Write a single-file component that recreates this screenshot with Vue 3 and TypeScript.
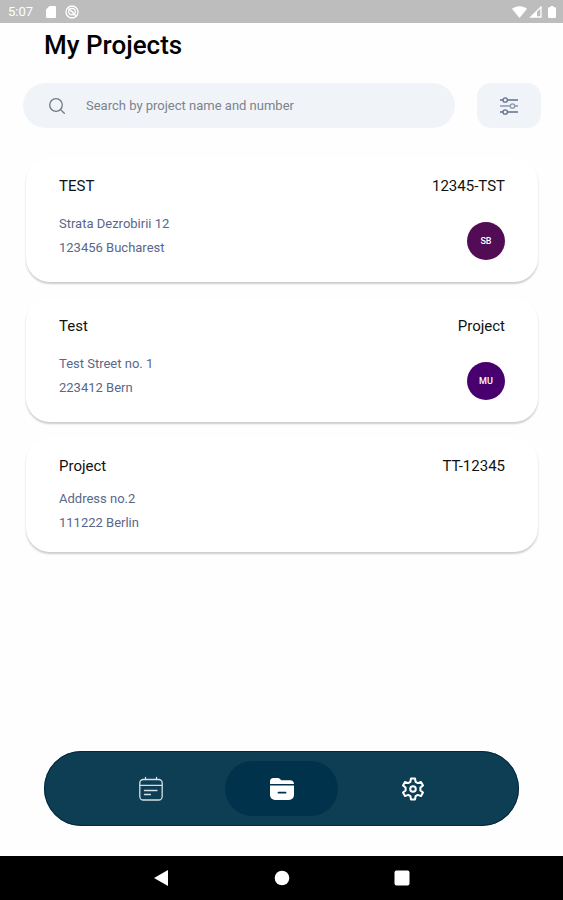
<script setup lang="ts">
import { ref } from 'vue'

interface Project {
  name: string
  code: string
  street: string
  city: string
  initials?: string
  tone?: string
}

const query = ref('')

const projects: Project[] = [
  { name: 'TEST', code: '12345-TST', street: 'Strata Dezrobirii 12', city: '123456 Bucharest', initials: 'SB', tone: 'plum' },
  { name: 'Test', code: 'Project', street: 'Test Street no. 1', city: '223412 Bern', initials: 'MU', tone: 'indigo' },
  { name: 'Project', code: 'TT-12345', street: 'Address no.2', city: '111222 Berlin' },
]
</script>

<template>
  <div class="screen">
    <div class="status">
      <span class="clock">5:07</span>
      <svg class="sd" width="10" height="12" viewBox="0 0 10 12"><path d="M3.6 0H9a1 1 0 0 1 1 1v10a1 1 0 0 1-1 1H1a1 1 0 0 1-1-1V3.600z" fill="#fff" /></svg>
      <svg width="14" height="14" viewBox="0 0 14 14" fill="none" stroke="#fff">
        <circle cx="7" cy="7" r="6" stroke-width="1.300" />
        <circle cx="7" cy="6.600" r="3.300" stroke-width="1.200" />
        <path d="M3.500 3.500l7.500 7.500M6 5.500l3 3M9.500 9.500l2 2.500" stroke-width="1.200" />
      </svg>
      <div class="signals">
        <svg width="15" height="12" viewBox="0 0 15 12"><path d="M7.500 12L0 2.800C4-.7 11-.7 15 2.800z" fill="#fff" /></svg>
        <svg width="13" height="12" viewBox="0 0 13 12"><path d="M12 1v10H1.800z" fill="none" stroke="#fff" stroke-width="1.300" /><path d="M8 5v6H1.800z" fill="#fff" /></svg>
        <svg class="battery" width="8" height="12" viewBox="0 0 8 12"><path d="M2.500 0h3v1.200H7a1 1 0 0 1 1 1V11a1 1 0 0 1-1 1H1a1 1 0 0 1-1-1V2.200a1 1 0 0 1 1-1h1.500z" fill="#fff" /></svg>
      </div>
    </div>

    <main class="content">
      <h1>My Projects</h1>

      <div class="tools">
        <label class="search">
          <svg width="18" height="18" viewBox="0 0 18 18" fill="none" stroke="#6b7886" stroke-width="1.300" stroke-linecap="round">
            <circle cx="8" cy="8" r="6.300" /><path d="M12.600 12.600L16.300 16.300" />
          </svg>
          <input v-model="query" type="text" placeholder="Search by project name and number" aria-label="Search projects" />
        </label>
        <button class="filter" type="button" aria-label="Filter">
          <svg width="18" height="18" viewBox="0 0 18 18" fill="none" stroke-width="1.300">
            <g stroke="#62718a"><path d="M0 3h3M7.500 3H18" /><circle cx="5.200" cy="3" r="2.200" /></g>
            <g stroke="#8998ad"><path d="M0 9h10M15 9h3" /><circle cx="12.500" cy="9" r="2.200" /></g>
            <g stroke="#62718a"><path d="M0 15h3M7.500 15H18" /><circle cx="5.200" cy="15" r="2.200" /></g>
          </svg>
        </button>
      </div>

      <ul class="list">
        <li v-for="p in projects" :key="p.code" class="card">
          <div class="head">
            <h2>{{ p.name }}</h2>
            <span class="code">{{ p.code }}</span>
          </div>
          <div class="body" :class="{ staffed: p.initials }">
            <address>{{ p.street }}<br />{{ p.city }}</address>
            <span v-if="p.initials" class="avatar" :class="p.tone">{{ p.initials }}</span>
          </div>
        </li>
      </ul>
    </main>

    <nav class="tabs" aria-label="Main">
      <button class="tab" type="button" aria-label="Calendar">
        <svg width="26" height="26" viewBox="0 0 26 26" fill="none" stroke="#d3dfe6" stroke-width="1.300" stroke-linecap="round">
          <rect x="1.800" y="3.500" width="22.400" height="20.500" rx="3.500" />
          <path d="M2 9.300h22M7.500 1.500v2M18.500 1.500v2M6.500 14.500h12.500M6.500 18.500h6" />
        </svg>
      </button>
      <button class="tab active" type="button" aria-label="Projects" aria-current="page">
        <svg width="26" height="26" viewBox="0 0 26 26">
          <path d="M1 8V5.500A3.500 3.500 0 0 1 4.500 2h4c1.500 0 2.200.5 3 1.500l.8.800H21A4 4 0 0 1 25 8z" fill="#fff" />
          <path d="M1 9.500h24V19a5 5 0 0 1-5 5H6a5 5 0 0 1-5-5z" fill="#fff" />
          <path d="M9.500 16.700h7" stroke="#00324b" stroke-width="1.800" stroke-linecap="round" />
        </svg>
      </button>
      <button class="tab" type="button" aria-label="Settings">
        <svg width="24" height="24" viewBox="0 0 24 24" fill="none" stroke="#fff" stroke-width="2" stroke-linejoin="round">
          <path d="M10 1.500h4l.6 3.300 2.200 1.300 3.200-1.200 2 3.500-2.600 2.200v2.800l2.600 2.200-2 3.500-3.200-1.200-2.200 1.300-.6 3.300h-4l-.6-3.300-2.200-1.300L4 19.100l-2-3.500 2.600-2.200v-2.800L2 8.400l2-3.500 3.200 1.200 2.200-1.300z" />
          <circle cx="12" cy="12" r="2.800" />
        </svg>
      </button>
    </nav>

    <div class="system">
      <button type="button" aria-label="Back"><svg width="16" height="16" viewBox="0 0 16 16"><path d="M14 0v16L0 8z" fill="#fff" /></svg></button>
      <button type="button" aria-label="Home"><svg width="16" height="16" viewBox="0 0 16 16"><circle cx="8" cy="8" r="7.300" fill="#fff" /></svg></button>
      <button type="button" aria-label="Recent apps"><svg width="16" height="16" viewBox="0 0 16 16"><rect x=".5" y=".5" width="15" height="15" rx="2" fill="#fff" /></svg></button>
    </div>
  </div>
</template>

<style>
body {
  margin: 0;
  background: #fefefe;
}
</style>

<style scoped>
.screen {
  display: flex;
  flex-direction: column;
  min-height: 100vh;
  font-family: Roboto, "Liberation Sans", sans-serif;
  color: #111;
}
svg {
  display: block;
  flex: none;
}
button {
  display: flex;
  align-items: center;
  justify-content: center;
  padding: 0;
  border: 0;
  background: none;
  cursor: pointer;
}
.status {
  display: flex;
  align-items: center;
  gap: 9px;
  height: 23px;
  padding: 0 7px 0 8px;
  background: #bdbdbd;
  color: #fff;
}
.clock {
  font-size: 13px;
  line-height: 23px;
}
.sd {
  margin-left: 4px;
}
.signals {
  display: flex;
  align-items: center;
  gap: 2px;
  margin-left: auto;
}
.battery {
  margin-left: 4px;
}
.content {
  padding: 4px 22px 0 23px;
}
h1 {
  margin: 0 0 20px;
  padding-left: 21px;
  font-size: 26px;
  line-height: 36px;
  font-weight: 500;
  color: #000;
}
.tools {
  display: flex;
  gap: 22px;
}
.search {
  display: flex;
  flex: 1;
  align-items: center;
  gap: 20px;
  height: 45px;
  padding: 0 24px 0 25px;
  border-radius: 23px;
  background: #f0f4f9;
}
.search input {
  flex: 1;
  min-width: 0;
  padding: 0;
  border: 0;
  outline: 0;
  background: none;
  font: 13px/18px Roboto, sans-serif;
  color: #333;
}
.search input::placeholder {
  color: #7b838c;
  opacity: 1;
}
.filter {
  width: 64px;
  height: 45px;
  border-radius: 14px;
  background: #f0f4f9;
}
.list {
  display: flex;
  flex-direction: column;
  gap: 16px;
  margin: 0;
  padding: 30px 3px 24px;
  list-style: none;
}
.card {
  padding: 18px 33px 17px;
  border-radius: 24px;
  background: #fff;
  box-shadow: 0 2px 2px rgba(0, 0, 0, 0.2);
}
.head {
  display: flex;
  align-items: center;
  justify-content: space-between;
  font-size: 15px;
  line-height: 20px;
}
h2 {
  margin: 0;
  font-size: 15px;
  font-weight: 400;
}
.body {
  display: flex;
  align-items: center;
  justify-content: space-between;
  padding-top: 11px;
}
.staffed {
  padding: 16px 0 5px;
}
address {
  font-style: normal;
  font-size: 13px;
  line-height: 24px;
  color: #59678a;
}
.avatar {
  display: flex;
  align-items: center;
  justify-content: center;
  width: 38px;
  height: 38px;
  margin-top: 10px;
  border-radius: 50%;
  font-size: 9px;
  font-weight: 500;
  color: #fff;
}
.plum {
  background: #520b55;
}
.indigo {
  background: #49006f;
}
.tabs {
  display: flex;
  align-items: center;
  justify-content: center;
  gap: 18px;
  height: 75px;
  margin: auto 44px 30px;
  border-radius: 38px;
  background: #0e3e53;
  box-shadow: inset 0 0 0 1px #062742;
}
.tab {
  width: 113px;
  height: 55px;
  border-radius: 28px;
}
.active {
  background: #00324b;
}
.system {
  display: flex;
  align-items: center;
  justify-content: center;
  gap: 104px;
  height: 44px;
  background: #000;
}
</style>
